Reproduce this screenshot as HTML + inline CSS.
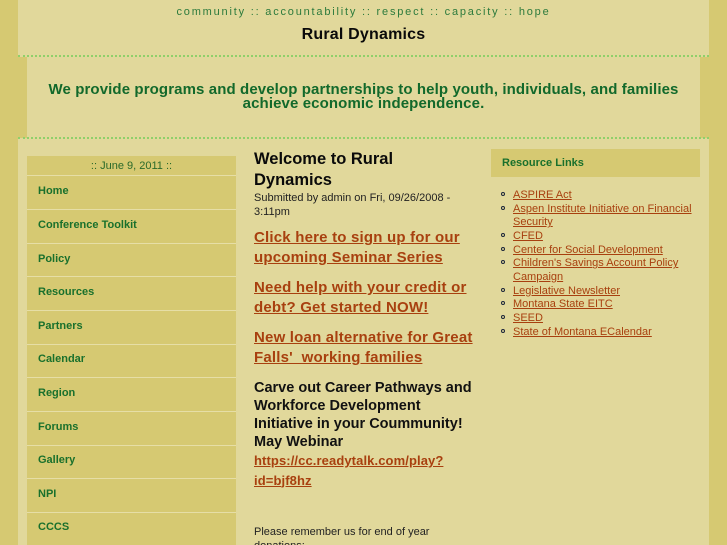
<!DOCTYPE html>
<html>
<head>
<meta charset="utf-8">
<title>Rural Dynamics</title>
<style>
html,body{margin:0;padding:0;background:#d6c972;width:727px;height:545px;overflow:hidden}
body{font-family:"Liberation Sans",sans-serif;position:relative;color:#111}
.a{position:absolute;white-space:nowrap}
a{color:#a8400f}
#wrap{position:absolute;left:18px;top:0;width:691px;height:545px;background:#e1d89b}
.dots{position:absolute;left:18px;width:691px;height:0;border-top:2px dotted #8fd06a}
#band{position:absolute;left:18px;top:57px;width:691px;height:81px;background:#d6c972}
#band div{position:absolute;left:9px;top:0;width:673px;height:81px;background:#e1d89b}
#nav{position:absolute;left:27px;top:156px;width:209px;height:389px;background:#d6c972}
#nav .sep{position:absolute;left:0;width:209px;height:1px;background:#e6dea6}
#nav .i{position:absolute;left:11px;font-size:11px;font-weight:bold;color:#19702c;white-space:nowrap;line-height:14px}
.big{font-size:15px;font-weight:bold;line-height:20px;letter-spacing:.2px}
ul{position:absolute;left:513px;top:189px;margin:0;padding:0;list-style:none;width:190px;font-size:11px;line-height:13.67px}
ul li{position:relative}
ul li:before{content:"";position:absolute;left:-12px;top:3px;width:2px;height:2px;border:1.5px solid #1a2438;border-radius:50%}
</style>
</head>
<body>
<div id="wrap"></div>
<div id="band"><div></div></div>
<div class="dots" style="top:55px"></div>
<div class="dots" style="top:137px"></div>

<div class="a" style="left:0;width:727px;text-align:center;top:5px;font-size:11px;line-height:14px;letter-spacing:1.8px;color:#2c7a3c">community :: accountability :: respect :: capacity :: hope</div>
<div class="a" style="left:0;width:727px;text-align:center;top:25px;font-size:16px;font-weight:bold;line-height:20px;letter-spacing:.2px;color:#0a0a0a">Rural Dynamics</div>

<div class="a" style="left:27px;width:673px;text-align:center;top:83px;font-size:15px;font-weight:bold;line-height:14px;letter-spacing:.11px;color:#12692b">We provide programs and develop partnerships to help youth, individuals, and families<br>achieve economic independence.</div>

<div id="nav">
<div class="a" style="left:0;width:209px;text-align:center;top:3px;font-size:11px;line-height:14px;color:#2a6a2a">:: June 9, 2011 ::</div>
<div class="sep" style="top:19px"></div>
<div class="i" style="top:28px">Home</div>
<div class="sep" style="top:53px"></div>
<div class="i" style="top:62px">Conference Toolkit</div>
<div class="sep" style="top:87px"></div>
<div class="i" style="top:96px">Policy</div>
<div class="sep" style="top:120px"></div>
<div class="i" style="top:129px">Resources</div>
<div class="sep" style="top:154px"></div>
<div class="i" style="top:163px">Partners</div>
<div class="sep" style="top:188px"></div>
<div class="i" style="top:196px">Calendar</div>
<div class="sep" style="top:221px"></div>
<div class="i" style="top:230px">Region</div>
<div class="sep" style="top:255px"></div>
<div class="i" style="top:264px">Forums</div>
<div class="sep" style="top:289px"></div>
<div class="i" style="top:297px">Gallery</div>
<div class="sep" style="top:322px"></div>
<div class="i" style="top:331px">NPI</div>
<div class="sep" style="top:356px"></div>
<div class="i" style="top:364px">CCCS</div>
</div>

<div class="a" style="left:254px;top:149px;font-size:16.5px;font-weight:bold;line-height:21px;color:#0a0a0a">Welcome to Rural<br>Dynamics</div>
<div class="a" style="left:254px;top:191px;font-size:11px;line-height:14px;color:#222">Submitted by admin on Fri, 09/26/2008 -<br>3:11pm</div>

<div class="a big" style="left:254px;top:228px"><a href="#">Click here to sign up for our<br>upcoming Seminar Series</a></div>
<div class="a big" style="left:254px;top:278px"><a href="#">Need help with your credit or<br>debt? Get started NOW!</a></div>
<div class="a big" style="left:254px;top:328px"><a href="#">New loan alternative for Great<br>Falls'&nbsp; working families</a></div>

<div class="a" style="left:254px;top:379px;font-size:14.5px;font-weight:bold;line-height:18.1px;color:#111">Carve out Career Pathways and<br>Workforce Development<br>Initiative in your Coummunity!<br>May Webinar</div>
<div class="a" style="left:254px;top:451px;font-size:13px;font-weight:bold;line-height:19.5px;letter-spacing:.1px"><a href="#">https://cc.readytalk.com/play?<br>id=bjf8hz</a></div>
<div class="a" style="left:254px;top:525px;font-size:11px;line-height:14px;color:#222">Please remember us for end of year<br>donations:</div>

<div style="position:absolute;left:491px;top:149px;width:209px;height:28px;background:#d6c972"></div>
<div class="a" style="left:502px;top:156px;font-size:11px;font-weight:bold;line-height:14px;color:#19702c">Resource Links</div>
<ul>
<li><a href="#">ASPIRE Act</a></li>
<li><a href="#">Aspen Institute Initiative on Financial Security</a></li>
<li><a href="#">CFED</a></li>
<li><a href="#">Center for Social Development</a></li>
<li><a href="#">Children's Savings Account Policy Campaign</a></li>
<li><a href="#">Legislative Newsletter</a></li>
<li><a href="#">Montana State EITC</a></li>
<li><a href="#">SEED</a></li>
<li><a href="#">State of Montana ECalendar</a></li>
</ul>
</body>
</html>
